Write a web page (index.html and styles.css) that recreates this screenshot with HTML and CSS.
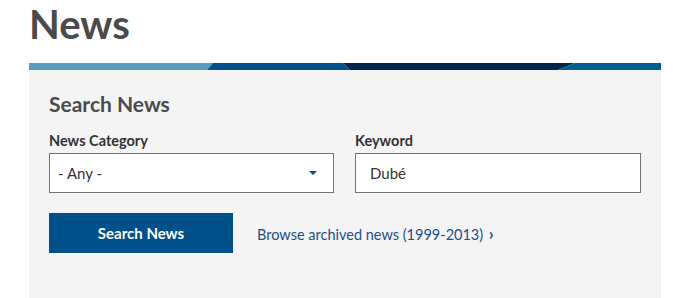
FILE: index.html
```html
<!doctype html>
<html lang="en">
<head>
    <meta charset="UTF-8">
    <title>News</title>
    <link rel="stylesheet" href="styles.css">
</head>
<body>
<div class="content">
    <h1>News</h1>
    <svg class="stripe" viewBox="0 0 632 7" preserveAspectRatio="none">
        <polygon points="0,0 184,0 178,7 0,7" fill="#5a9bbf"/>
        <polygon points="184,0 314,0 321,7 178,7" fill="#00518c"/>
        <polygon points="314,0 546,0 529,7 321,7" fill="#02294a"/>
        <polygon points="546,0 632,0 632,7 529,7" fill="#005d93"/>
    </svg>
    <div class="search">
        <h2>Search News</h2>
        <div class="fields">
            <div class="field">
                <label for="category">News Category</label>
                <div class="select">
                    <select id="category">
                        <option>- Any -</option>
                    </select>
                </div>
            </div>
            <div class="field">
                <label for="keyword">Keyword</label>
                <input type="text" id="keyword" value="Dubé">
            </div>
        </div>
        <div class="actions">
            <a class="button" href="#">Search News</a>
            <a class="archive" href="#">Browse archived news (1999-2013) <span class="chevron">›</span></a>
        </div>
    </div>
</div>
</body>
</html>
```

FILE: styles.css
```css
* {
    padding: 0;
    margin: 0;
    box-sizing: border-box;
}

body {
    font-family: Lato, "Open Sans", sans-serif;
    color: #333;
    background: #fff;
}

.content {
    width: 632px;
    margin-left: 29px;
}

h1 {
    font-size: 40px;
    font-weight: 700;
    line-height: 40px;
    color: #4a4a4a;
    padding-top: 4px;
    margin-bottom: 19px;
}

.stripe {
    display: block;
    width: 632px;
    height: 7px;
}

.search {
    background: #f4f4f4;
    padding: 22px 20px 48px;
}

h2 {
    font-size: 21px;
    font-weight: 700;
    line-height: 24px;
    color: #4a4a4a;
    margin-bottom: 16px;
}

.fields {
    display: grid;
    grid-template-columns: 285px 286px;
    column-gap: 21px;
}

label {
    display: block;
    font-size: 14.5px;
    font-weight: 700;
    line-height: 17px;
    color: #333;
    margin-bottom: 4px;
}

.select {
    position: relative;
}

.select::after {
    content: "";
    position: absolute;
    right: 17px;
    top: 18px;
    border-left: 4px solid transparent;
    border-right: 4px solid transparent;
    border-top: 4px solid #00508c;
}

select,
input {
    display: block;
    width: 100%;
    height: 40px;
    border: 1px solid #747474;
    border-radius: 0;
    background: #fff;
    font-family: Lato, "Open Sans", sans-serif;
    font-size: 15px;
    color: #333;
    appearance: none;
    -webkit-appearance: none;
    outline: none;
}

select {
    padding: 0 8px;
}

input {
    padding: 0 14px;
}

.actions {
    display: flex;
    align-items: center;
    gap: 24px;
    margin-top: 20px;
}

.button {
    display: block;
    width: 184px;
    height: 40px;
    line-height: 40px;
    text-align: center;
    font-size: 15px;
    font-weight: 700;
    color: #fff;
    background: #00508c;
    text-decoration: none;
}

.archive {
    font-size: 14.5px;
    color: #1c4f87;
    text-decoration: none;
}

.chevron {
    font-size: 17px;
    font-weight: 700;
    margin-left: 2px;
}
```
